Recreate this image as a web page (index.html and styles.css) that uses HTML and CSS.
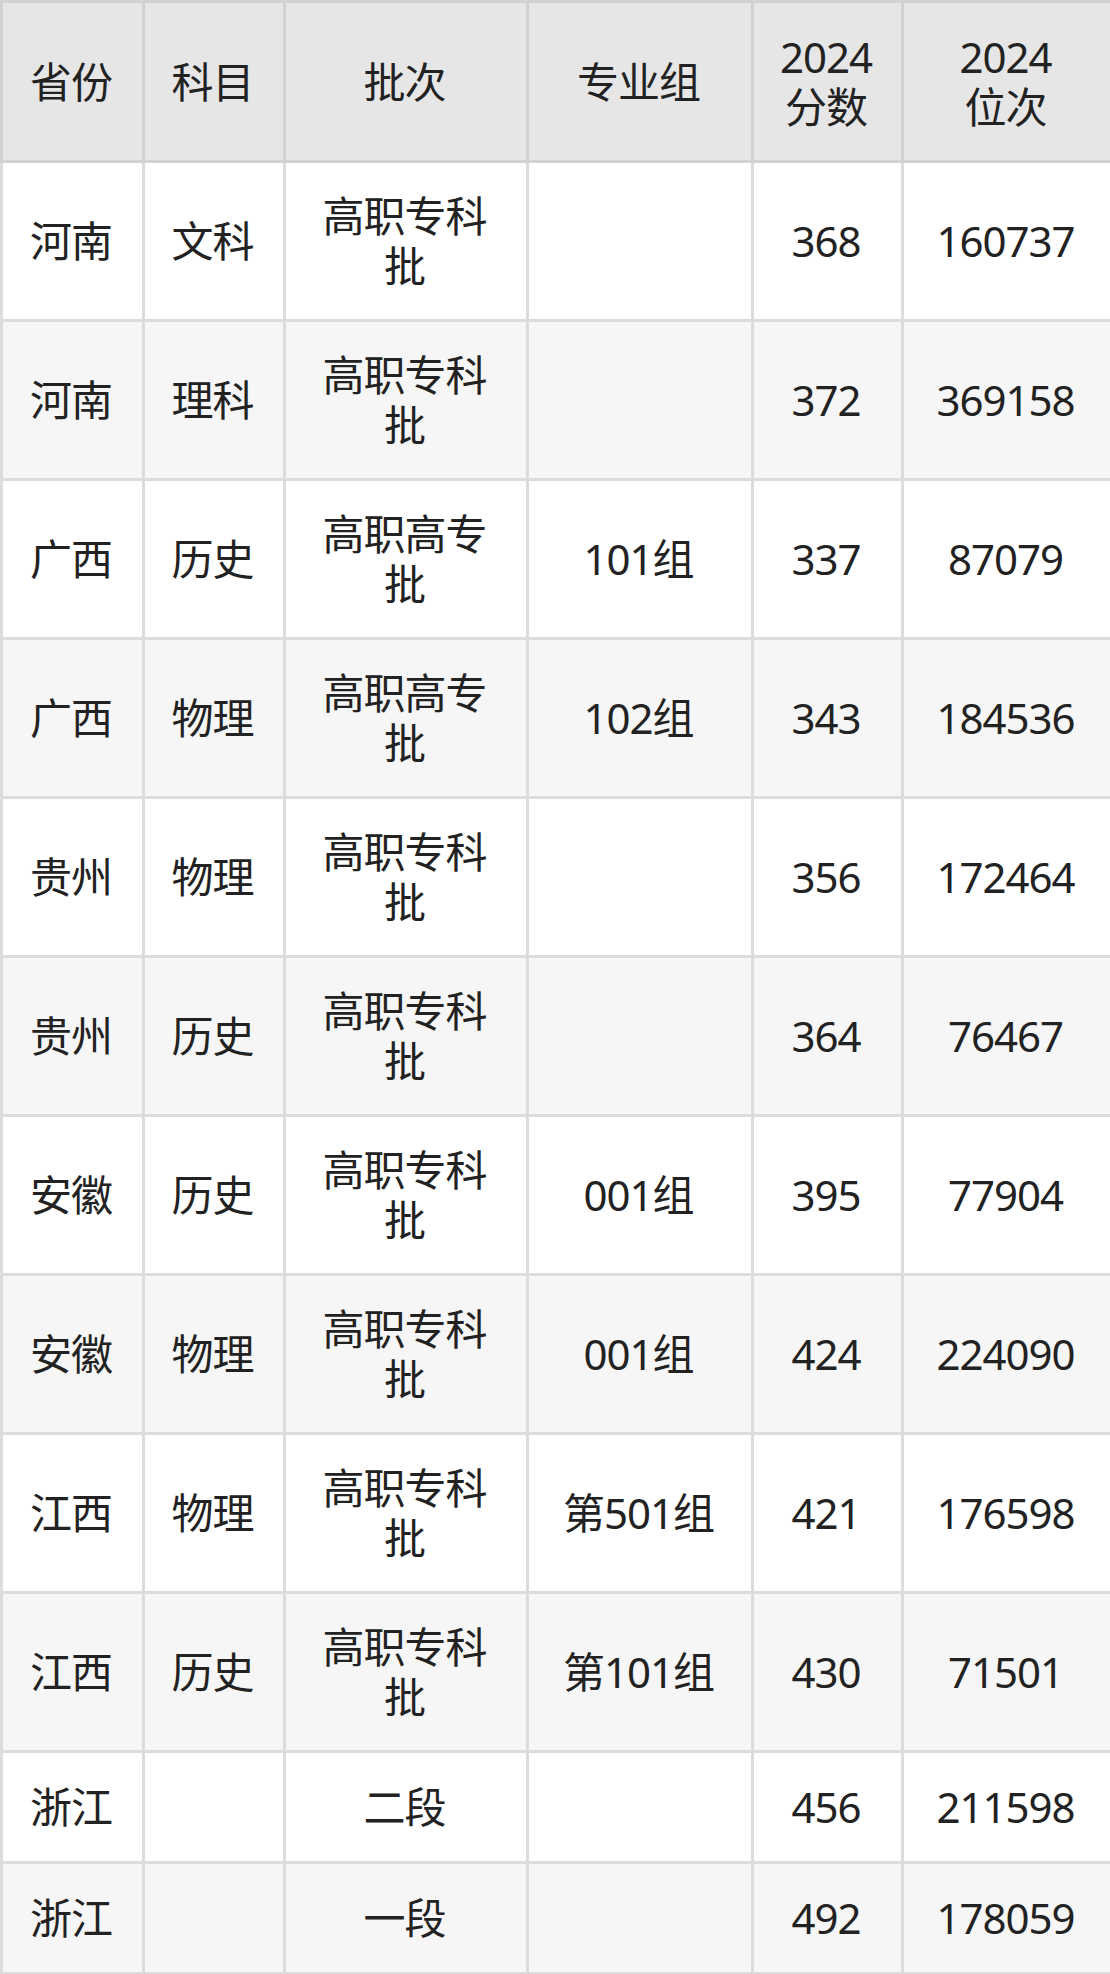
FILE: index.html
```html
<!DOCTYPE html>
<html lang="zh-CN">
<head>
<meta charset="utf-8">
<link rel="stylesheet" href="styles.css">
</head>
<body>
<table class="score-table">
  <colgroup>
    <col class="c1"><col class="c2"><col class="c3"><col class="c4"><col class="c5"><col class="c6">
  </colgroup>
  <thead>
    <tr class="head">
      <th>省份</th><th>科目</th><th>批次</th><th>专业组</th><th>2024<br>分数</th><th>2024<br>位次</th>
    </tr>
  </thead>
  <tbody>
    <tr class="tall"><td>河南</td><td>文科</td><td>高职专科<br>批</td><td></td><td>368</td><td>160737</td></tr>
    <tr class="tall alt"><td>河南</td><td>理科</td><td>高职专科<br>批</td><td></td><td>372</td><td>369158</td></tr>
    <tr class="tall"><td>广西</td><td>历史</td><td>高职高专<br>批</td><td>101组</td><td>337</td><td>87079</td></tr>
    <tr class="tall alt"><td>广西</td><td>物理</td><td>高职高专<br>批</td><td>102组</td><td>343</td><td>184536</td></tr>
    <tr class="tall"><td>贵州</td><td>物理</td><td>高职专科<br>批</td><td></td><td>356</td><td>172464</td></tr>
    <tr class="tall alt"><td>贵州</td><td>历史</td><td>高职专科<br>批</td><td></td><td>364</td><td>76467</td></tr>
    <tr class="tall"><td>安徽</td><td>历史</td><td>高职专科<br>批</td><td>001组</td><td>395</td><td>77904</td></tr>
    <tr class="tall alt"><td>安徽</td><td>物理</td><td>高职专科<br>批</td><td>001组</td><td>424</td><td>224090</td></tr>
    <tr class="tall"><td>江西</td><td>物理</td><td>高职专科<br>批</td><td>第501组</td><td>421</td><td>176598</td></tr>
    <tr class="tall alt"><td>江西</td><td>历史</td><td>高职专科<br>批</td><td>第101组</td><td>430</td><td>71501</td></tr>
    <tr class="short"><td>浙江</td><td></td><td>二段</td><td></td><td>456</td><td>211598</td></tr>
    <tr class="short alt"><td>浙江</td><td></td><td>一段</td><td></td><td>492</td><td>178059</td></tr>
  </tbody>
</table>
</body>
</html>
```
FILE: styles.css
```css
html, body {
  margin: 0;
  padding: 0;
  background: #ffffff;
}

.score-table {
  width: 1110px;
  table-layout: fixed;
  border-collapse: collapse;
  font-family: "Noto Sans", "Noto Sans CJK SC", sans-serif;
  font-size: 42px;
  line-height: 50px;
  letter-spacing: -1px;
  color: #222222;
}

.c1 { width: 142px; }
.c2 { width: 141px; }
.c3 { width: 243px; }
.c4 { width: 225px; }
.c5 { width: 150px; }
.c6 { width: 209px; }

.score-table th,
.score-table td {
  border: 3px solid #dcdcdc;
  text-align: center;
  vertical-align: middle;
  padding: 0 3px 0 0;
  font-weight: 400;
}

.head th {
  background: #e6e6e6;
  border-color: #d2d2d2;
}

.head {
  height: 160px;
}

.tall {
  height: 159px;
}

.short {
  height: 111px;
}

.alt td {
  background: #f6f6f6;
}
```
